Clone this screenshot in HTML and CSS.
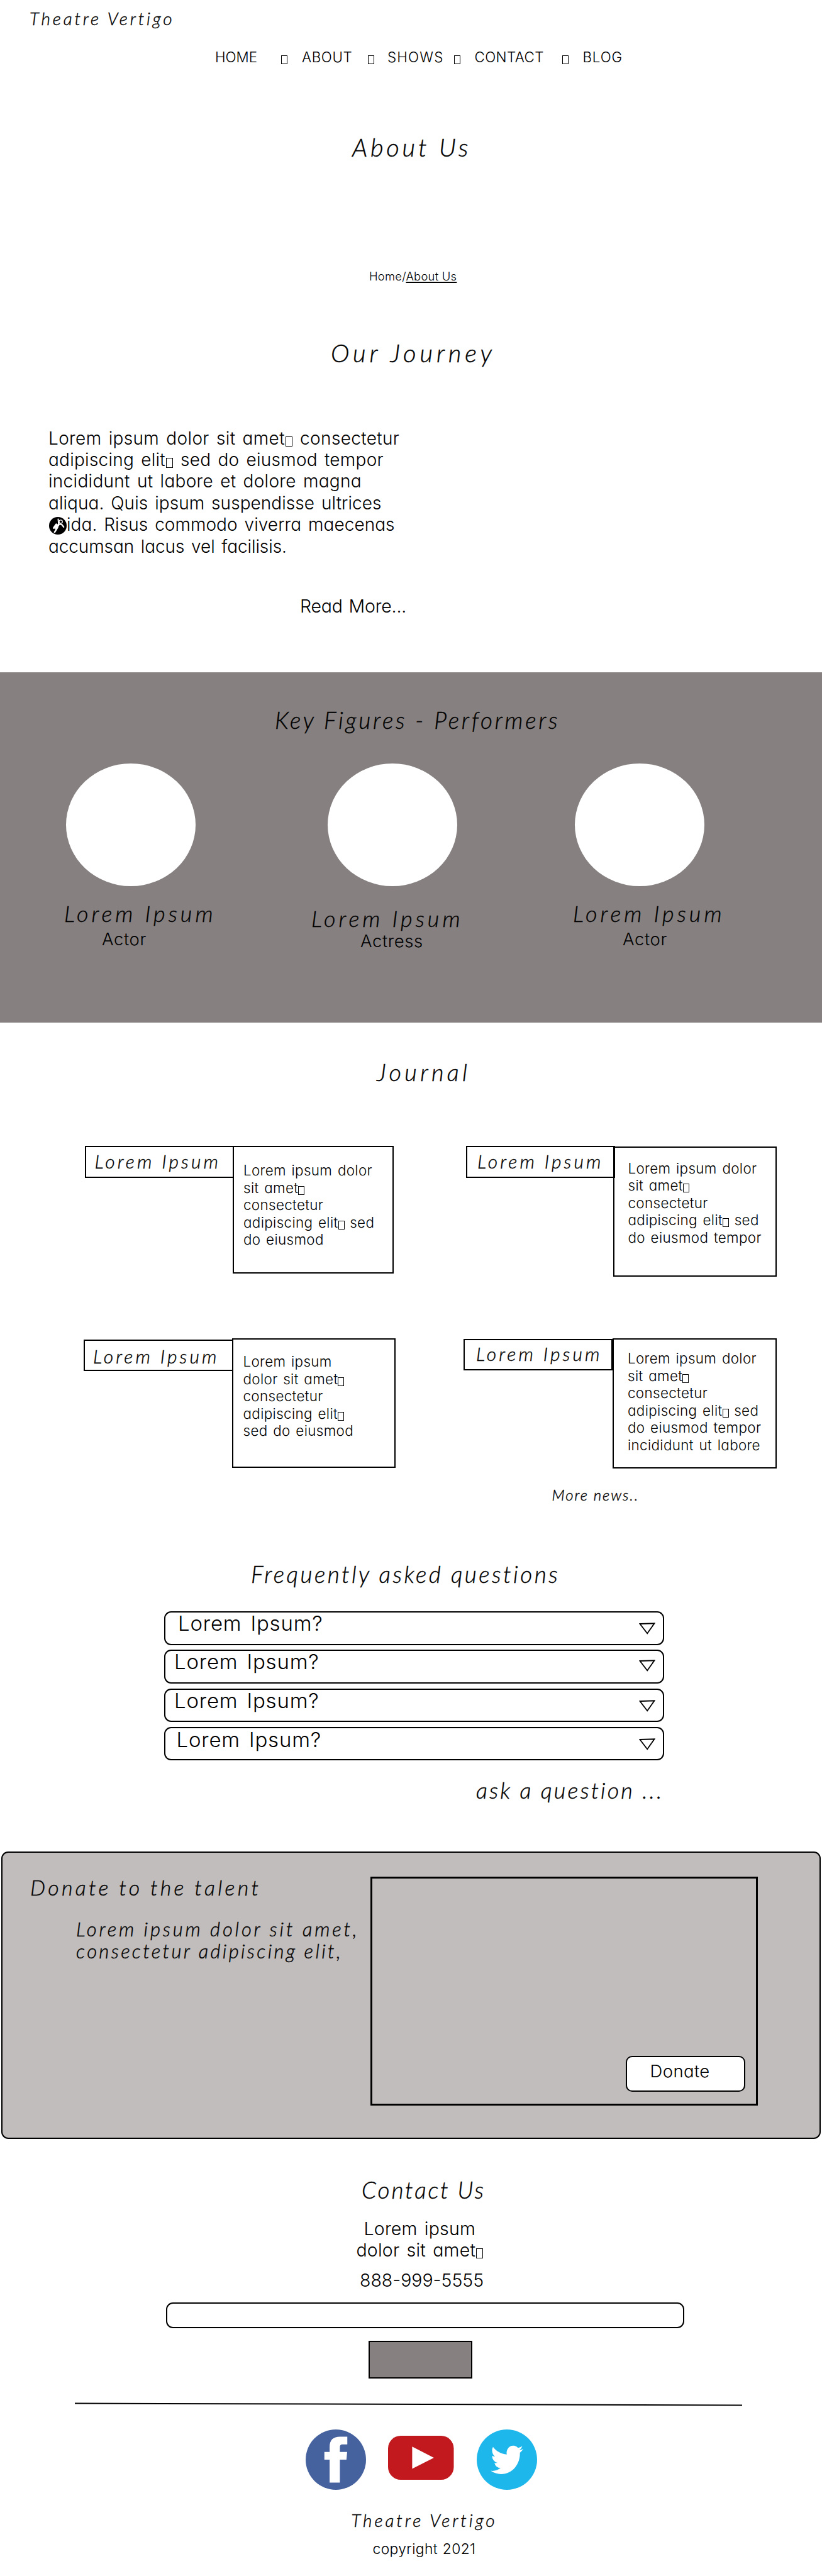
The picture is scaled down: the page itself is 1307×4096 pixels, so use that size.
FILE: index.html
```html
<!DOCTYPE html>
<html lang="en">
<head>
<meta charset="utf-8">
<title>Theatre Vertigo - About Us</title>
<link rel="stylesheet" href="styles.css">
</head>
<body>
<header class="header">
  <div class="script brand">Theatre Vertigo</div>
  <nav class="nav">
    <a>HOME</a><i class="tofu"></i>
    <a class="nav-about">ABOUT</a><i class="tofu"></i>
    <a class="nav-shows">SHOWS</a><i class="tofu"></i>
    <a class="nav-contact">CONTACT</a><i class="tofu"></i>
    <a class="nav-blog">BLOG</a>
  </nav>
</header>

<main>
<section class="intro">
  <h1 class="script page-title">About Us</h1>
  <div class="crumbs">Home/<span class="current">About Us</span></div>
  <h2 class="script journey-title">Our Journey</h2>
  <p class="journey-text">
    <span class="l1">Lorem ipsum dolor sit amet<i class="tofu"></i> consectetur</span>
    <span class="l2">adipiscing elit<i class="tofu"></i> sed do eiusmod tempor</span>
    <span class="l3">incididunt ut labore et dolore magna</span>
    <span class="l4">aliqua. Quis ipsum suspendisse ultrices</span>
    <span class="l5"><svg class="astronaut" viewBox="0 0 29 29"><circle cx="14.5" cy="14.5" r="14.5" fill="#000"/><g fill="none" stroke="#fff" stroke-linecap="round" stroke-linejoin="round"><path d="M15 3.5l.7 7" stroke-width="2"/><path d="M16 12l-4.500 7M12 12.500l-4 5.500" stroke-width="3.400"/><path d="M14 17l-3 5-1.800 3" stroke-width="2.600"/><path d="M18 11.500l3.500 1.500 2.500 3.500" stroke-width="2.400"/><circle cx="19.300" cy="7.800" r="2.700" stroke-width="1.300"/></g></svg>ida. Risus commodo viverra maecenas</span>
    <span class="l6">accumsan lacus vel facilisis.</span>
  </p>
  <a class="read-more">Read More...</a>
</section>

<section class="performers">
  <h2 class="script performers-title">Key Figures - Performers</h2>
  <div class="cast">
    <div class="member m1"><div class="portrait"></div><div class="script name">Lorem Ipsum</div><div class="role">Actor</div></div>
    <div class="member m2"><div class="portrait"></div><div class="script name">Lorem Ipsum</div><div class="role">Actress</div></div>
    <div class="member m3"><div class="portrait"></div><div class="script name">Lorem Ipsum</div><div class="role">Actor</div></div>
  </div>
</section>

<section class="journal">
  <h2 class="script journal-title">Journal</h2>
  <div class="cards">
    <article class="card c1">
      <h3 class="script label">Lorem Ipsum</h3>
      <p class="body">Lorem ipsum dolor<br>sit amet<i class="tofu"></i><br>consectetur<br>adipiscing elit<i class="tofu"></i> sed<br>do eiusmod</p>
    </article>
    <article class="card c2">
      <h3 class="script label">Lorem Ipsum</h3>
      <p class="body">Lorem ipsum dolor<br>sit amet<i class="tofu"></i><br>consectetur<br>adipiscing elit<i class="tofu"></i> sed<br>do eiusmod tempor</p>
    </article>
    <article class="card c3">
      <h3 class="script label">Lorem Ipsum</h3>
      <p class="body">Lorem ipsum<br>dolor sit amet<i class="tofu"></i><br>consectetur<br>adipiscing elit<i class="tofu"></i><br>sed do eiusmod</p>
    </article>
    <article class="card c4">
      <h3 class="script label">Lorem Ipsum</h3>
      <p class="body">Lorem ipsum dolor<br>sit amet<i class="tofu"></i><br>consectetur<br>adipiscing elit<i class="tofu"></i> sed<br>do eiusmod tempor<br>incididunt ut labore</p>
    </article>
  </div>
  <a class="script more-news">More news..</a>
</section>

<section class="faq">
  <h2 class="script faq-title">Frequently asked questions</h2>
  <div class="questions">
    <div class="question q1"><span>Lorem Ipsum?</span><svg class="arrow" viewBox="0 0 26 19"><path d="M1.500 2L24.500 1.300L13.200 17.200z"/></svg></div>
    <div class="question q2"><span>Lorem Ipsum?</span><svg class="arrow" viewBox="0 0 26 19"><path d="M1.500 2L24.500 1.300L13.200 17.200z"/></svg></div>
    <div class="question q3"><span>Lorem Ipsum?</span><svg class="arrow" viewBox="0 0 26 19"><path d="M1.500 2L24.500 1.300L13.200 17.200z"/></svg></div>
    <div class="question q4"><span>Lorem Ipsum?</span><svg class="arrow" viewBox="0 0 26 19"><path d="M1.500 2L24.500 1.300L13.200 17.200z"/></svg></div>
  </div>
  <a class="script ask">ask a question ...</a>
</section>

<section class="donate">
  <div class="donate-copy">
    <h2 class="script donate-title">Donate to the talent</h2>
    <p class="script donate-text"><span class="d1">Lorem ipsum dolor sit amet,</span><span class="d2">consectetur adipiscing elit,</span></p>
  </div>
  <div class="donate-frame"><a class="donate-button">Donate</a></div>
</section>

<section class="contact">
  <h2 class="script contact-title">Contact Us</h2>
  <p class="address"><span class="a1">Lorem ipsum</span><span class="a2">dolor sit amet<i class="tofu"></i></span></p>
  <p class="phone">888-999-5555</p>
  <div class="field"></div>
  <div class="submit"></div>
</section>
</main>

<footer class="footer">
  <svg class="rule" viewBox="0 0 1061 6"><path d="M0 1.500L1061 4.500" stroke="#000" stroke-width="2"/></svg>
  <div class="social">
    <svg class="facebook" viewBox="0 0 100 100"><circle cx="50" cy="50" r="50" fill="#46629e"/><path fill="#fff" d="M39.700 88V50H31V37.300h8.700V29C39.700 17 46 12 57 12h12v12.700h-7.500c-4 0-4.800 2-4.800 5v7.600H68.700L67.600 50H56.700v38z"/></svg>
    <svg class="youtube" viewBox="0 0 109 73"><rect width="109" height="73" rx="21" fill="#c2191e"/><path fill="#fff" d="M40 18l36 18.400L40 54.700z"/></svg>
    <svg class="twitter" viewBox="0 0 100 100"><circle cx="50" cy="50" r="50" fill="#1eb7ec"/><path fill="#fff" transform="translate(23.300 21.300) scale(2.240 2.420)" d="M23.953 4.570a10 10 0 01-2.825.775 4.958 4.958 0 002.163-2.723c-.951.555-2.005.959-3.127 1.184a4.920 4.920 0 00-8.384 4.482C7.690 8.095 4.067 6.130 1.640 3.162a4.822 4.822 0 00-.666 2.475c0 1.710.870 3.213 2.188 4.096a4.904 4.904 0 01-2.228-.616v.060a4.923 4.923 0 003.946 4.827 4.996 4.996 0 01-2.212.085 4.936 4.936 0 004.604 3.417 9.867 9.867 0 01-6.102 2.105c-.390 0-.779-.023-1.170-.067a13.995 13.995 0 007.557 2.209c9.053 0 13.998-7.496 13.998-13.985 0-.210 0-.420-.015-.630A9.935 9.935 0 0024 4.590z"/></svg>
  </div>
  <div class="script footer-brand">Theatre Vertigo</div>
  <div class="copyright">copyright 2021</div>
</footer>
</body>
</html>
```
FILE: styles.css
```css
* { box-sizing: border-box; margin: 0; padding: 0; }

body {
  width: 1307px;
  height: 4096px;
  overflow: hidden;
  background: #fff;
  color: #000;
  font-family: Inter, "Open Sans", sans-serif;
  font-weight: 300;
  font-feature-settings: "cv11";
  line-height: 1.2;
}

h1, h2, h3 { font-weight: 400; }
svg { display: block; }

.script {
  display: block;
  font-family: "Segoe Script", Lato, sans-serif;
  font-style: italic;
  font-weight: 300;
  font-feature-settings: normal;
  white-space: nowrap;
  -webkit-text-stroke: .4px #000;
}

.tofu {
  display: inline-block;
  width: 11px;
  height: 16px;
  margin: 0 1px;
  border: 1px solid #000;
  vertical-align: -3px;
}

/* header */
.header { padding-top: 13.4px; }
.brand { margin-left: 47px; font-size: 28px; letter-spacing: 3.8px; }
.nav {
  display: grid;
  grid-template-columns: 104.5px 33.5px 105px 31px 106px 32.5px 139px 33px auto;
  align-items: end;
  margin-top: 30.9px;
  padding-left: 342px;
  font-size: 22.4px;
}
.nav .tofu { width: 10px; height: 14px; margin: 0 0 3px; }
.nav-about { letter-spacing: .6px; }
.nav-shows { letter-spacing: 1.2px; }
.nav-contact { letter-spacing: .4px; }
.nav-blog { letter-spacing: .8px; }

/* intro */
.intro { height: 963.9px; }
.page-title { padding-top: 105.2px; margin-left: 560px; font-size: 40px; letter-spacing: 4.7px; }
.crumbs { margin: 169.8px 0 0 587px; font-size: 18.4px; letter-spacing: .25px; }
.current { text-decoration: underline; text-decoration-thickness: 2px; text-underline-offset: 2px; text-decoration-skip-ink: none; }
.journey-title { margin: 87.6px 0 0 526px; font-size: 40px; letter-spacing: 5.8px; }
.journey-text { margin: 94.1px 0 0 77px; font-size: 28px; line-height: 34.45px; white-space: nowrap; word-spacing: 3px; }
.journey-text span { display: block; }
.l1 { letter-spacing: .35px; }
.l2 { letter-spacing: .25px; }
.l3 { letter-spacing: .3px; }
.l4 { letter-spacing: .05px; }
.l5 { letter-spacing: .05px; }
.l6 { letter-spacing: -.1px; }
.astronaut { display: inline-block; width: 28px; height: 28px; margin: -4px 0 -4px 1px; vertical-align: -2px; }
.read-more { display: block; margin: 60.7px 0 0 477px; font-size: 28.5px; letter-spacing: -.2px; word-spacing: 2px; }

/* performers */
.performers { height: 557.3px; padding-top: 54.3px; background: #868180; }
.performers-title { margin-left: 437px; font-size: 37px; letter-spacing: 3.7px; }
.cast { display: grid; grid-template-columns: 393px 416px auto; margin-top: 46.6px; padding-left: 104px; }
.portrait { width: 206px; height: 195px; margin-left: 1px; border-radius: 50%; background: #fff; }
.name { margin-top: 22px; margin-left: -2px; font-size: 36px; letter-spacing: 5px; }
.role { margin: 3px 0 0 58px; font-size: 27.5px; letter-spacing: .6px; }
.m2 .portrait { margin-left: 24px; }
.m2 .name { margin-top: 30.5px; }
.m2 .role { margin: -2.2px 0 0 76px; }
.m3 .role { margin-left: 77px; }

/* journal */
.journal { height: 853.5px; padding-top: 56.5px; }
.journal-title { margin-left: 599px; font-size: 38px; letter-spacing: 5.3px; }
.cards { display: grid; grid-template-columns: 605.5px auto; grid-template-rows: 305.5px 207px; margin-top: 94.4px; padding-left: 135px; }
.card { display: flex; align-items: flex-start; }
.label { width: 237px; height: 50.5px; padding: 3.2px 0 0 13.5px; border: 2px solid #000; font-size: 30px; letter-spacing: 4.1px; }
.body { width: 256px; height: 202.5px; margin-left: -2px; padding: 22.9px 0 0 15px; border: 2px solid #000; font-size: 22.4px; line-height: 27.5px; letter-spacing: .35px; word-spacing: 2px; white-space: nowrap; }
.body .tofu { width: 10px; height: 14px; margin: 0; }
.c2 .label { padding-left: 16.5px; }
.c2 .body { width: 260px; height: 206.5px; margin-left: -3px; margin-top: 1px; padding: 18.1px 0 0 22px; }
.c3 { margin-left: -2.5px; }
.c3 .label { width: 238px; margin-top: 2px; padding-top: 6px; }
.c3 .body { width: 260.5px; height: 206.5px; padding: 21.1px 0 0 16px; }
.c4 { margin-left: -3.5px; }
.c4 .label { margin-top: 1px; padding: 2.7px 0 0 18px; }
.c4 .body { width: 261px; height: 207px; margin-left: 0; padding: 16.1px 0 0 22px; }
.more-news { margin: 28px 0 0 877.5px; font-size: 24px; letter-spacing: 1.9px; }

/* faq */
.faq { height: 464.5px; padding-top: 1.5px; }
.faq-title { margin-left: 399px; font-size: 37px; letter-spacing: 3.4px; }
.questions { display: flex; flex-direction: column; gap: 7.9px; width: 795px; margin: 36.9px 0 0 261px; }
.question { display: flex; justify-content: space-between; height: 53.3px; padding: 0 12px 0 20px; border: 2px solid #000; border-radius: 11px; font-size: 33px; line-height: 33px; letter-spacing: .8px; word-spacing: 4px; }
.question span { margin-top: 1px; }
.arrow { width: 26px; height: 19px; margin-top: 16px; fill: none; stroke: #000; stroke-width: 1.8; }
.q2, .q3 { padding-left: 14px; }
.q2 .arrow { margin-top: 13.5px; }
.q3 span, .q4 span { margin-top: 1.8px; }
.q4 { padding-left: 17.5px; }
.ask { margin: 26.3px 0 0 757px; font-size: 36px; letter-spacing: 3.1px; }

/* donate */
.donate { display: flex; width: 1302.5px; height: 457px; margin-left: 2px; border: 2px solid #000; border-radius: 11px; background: #c1bdbc; }
.donate-copy { width: 584.5px; padding-top: 35.4px; }
.donate-title { margin-left: 44px; font-size: 34px; letter-spacing: 4.3px; }
.donate-text { margin: 28px 0 0 117px; font-size: 31px; line-height: 34.45px; }
.donate-text span { display: block; }
.d1 { letter-spacing: 3.8px; }
.d2 { letter-spacing: 3.3px; }
.donate-frame { display: flex; align-items: flex-end; justify-content: flex-end; width: 616px; height: 364.5px; margin-top: 38px; padding: 0 17px 19.5px 0; border: 3px solid #000; }
.donate-button { width: 190px; height: 57.3px; padding: 6.3px 0 0 37px; border: 2px solid #000; border-radius: 10px; background: #fff; font-size: 27.5px; letter-spacing: .4px; }

/* contact */
.contact { height: 419px; padding-top: 59.5px; }
.contact-title { margin-left: 575px; font-size: 37px; letter-spacing: 2.8px; }
.address { margin: 22px 0 0 566.5px; font-size: 28.5px; line-height: 34.5px; letter-spacing: .2px; word-spacing: 3px; }
.address span { display: block; }
.a1 { padding-left: 12px; }
.phone { margin: 13.6px 0 0 572px; font-size: 28.5px; }
.field { width: 824px; height: 41px; margin: 17px 0 0 264px; border: 2px solid #000; border-radius: 11px; }
.submit { width: 165.5px; height: 60px; margin: 20.3px 0 0 585.5px; border: 2px solid #000; background: #868180; }

/* footer */
.rule { width: 1061px; height: 6px; margin-left: 119px; }
.social { display: flex; margin: 37.5px 0 0 486px; }
.facebook { width: 96px; height: 96px; }
.youtube { width: 104.5px; height: 70px; margin: 9.5px 0 0 35px; }
.twitter { width: 96px; height: 96px; margin-left: 36.5px; }
.footer-brand { margin: 31.4px 0 0 558.5px; font-size: 28px; letter-spacing: 3.9px; }
.copyright { margin: 15px 0 0 592.5px; font-size: 22.8px; letter-spacing: .4px; word-spacing: 1px; }
```
